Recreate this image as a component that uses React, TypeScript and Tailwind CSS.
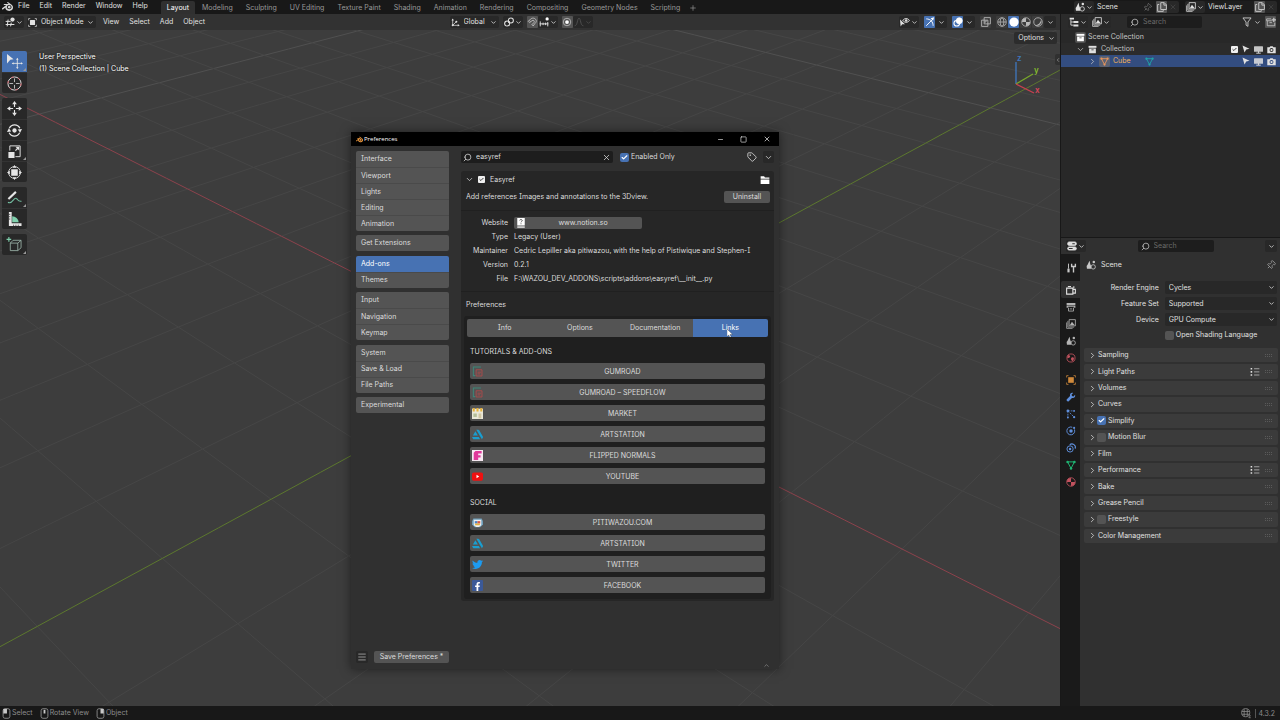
import React, { useId, useState } from 'react';
import { Check, ChevronDown, ChevronRight, Menu, Minus, Pin, Plus, Search, Square, Tag, X } from 'lucide-react';
import { FaFacebookF, FaTwitter } from 'react-icons/fa';
import { SiArtstation, SiBlender } from 'react-icons/si';
import clsx from 'clsx';

/* ---------- Icons ---------- */

type IconName =
  | 'editor3d' | 'objectMode' | 'orientation' | 'pivot' | 'magnet' | 'snapTo' | 'proportional' | 'falloff'
  | 'visibility' | 'gizmo' | 'overlay' | 'xray' | 'wire' | 'solid' | 'material' | 'rendered'
  | 'scene' | 'layers' | 'copy' | 'outliner' | 'filter' | 'newCollection' | 'collection' | 'mesh'
  | 'arrow' | 'screen' | 'camera' | 'properties' | 'tool' | 'render' | 'output' | 'world' | 'object'
  | 'wrench' | 'particles' | 'physics' | 'constraint' | 'folder' | 'help' | 'globe' | 'presets'
  | 'select' | 'cursor' | 'move' | 'rotate' | 'scale' | 'transform' | 'annotate' | 'measure' | 'addCube';

const glyphs: Record<IconName, React.ReactNode> = {
  editor3d: (
    <>
      <path d="M1 7h8M1 12h14M5 4 3.5 15M10 9l-1 6" strokeWidth="1.6" />
      <circle cx="12" cy="4" r="3.4" fill="currentColor" stroke="none" />
    </>
  ),
  objectMode: (
    <>
      <path d="M1 4V1h3M12 1h3v3M15 12v3h-3M4 15H1v-3" strokeWidth="1.2" />
      <rect x="3.5" y="3.5" width="9" height="9" rx="1" fill="currentColor" stroke="none" />
    </>
  ),
  orientation: (
    <>
      <path d="M3 2v11h11M3 13l6-6" />
      <path d="M1 4.5 3 1l2 3.5zM12 11l3.5 2-3.5 2z" fill="currentColor" stroke="none" />
      <circle cx="9.5" cy="6.5" r="1.8" fill="currentColor" stroke="none" />
      <circle cx="3" cy="13" r="1.8" fill="currentColor" stroke="none" />
    </>
  ),
  pivot: (
    <>
      <circle cx="5" cy="10.5" r="4" strokeWidth="1.7" />
      <circle cx="11" cy="5.5" r="4" strokeWidth="1.7" />
      <circle cx="8" cy="8" r="1.5" fill="currentColor" stroke="none" />
    </>
  ),
  magnet: <path d="m2 7 4-4c6-4 12 3 7 7l-3 4-2-2 3-3c2-3-1-5-3-3L4 9zM3.5 5.5l2 2M8.5 12.5l2 2" />,
  snapTo: (
    <>
      <path d="M1 11h14M2 7v8M6.5 9v4M10.5 9v4M14 8v7" strokeWidth="1.5" />
      <circle cx="13" cy="3" r="2.6" fill="#fff" stroke="none" />
    </>
  ),
  proportional: (
    <>
      <circle cx="8" cy="8" r="6" strokeWidth="1.2" />
      <circle cx="8" cy="8" r="3" fill="#fff" stroke="none" />
    </>
  ),
  falloff: <path d="M1 14c5 0 4-12 7-12s2 12 7 12" />,
  visibility: (
    <>
      <path d="M4.5 5.5C7 1.5 12.5 1.5 15 5.5c-2.5 4-8 4-10.5 0z" strokeWidth="1.6" />
      <circle cx="9.8" cy="5.5" r="2" fill="currentColor" stroke="none" />
      <path d="m0 4 1 11 2.5-3.5H8z" fill="currentColor" stroke="none" />
    </>
  ),
  gizmo: (
    <>
      <path d="M2 3c7 0 11 5 11 11M2 14 13 3" strokeWidth="1.5" />
      <path d="m9 2 5.5-1.5L13 6z" fill="currentColor" stroke="none" />
    </>
  ),
  overlay: (
    <>
      <circle cx="10" cy="6" r="4.8" fill="currentColor" />
      <circle cx="6" cy="10" r="4.5" strokeWidth="1.7" />
    </>
  ),
  xray: <path d="M5 1h10v10H5zM1 5h10v10H1zM5 8h3M8 5v3" strokeWidth="1.4" />,
  wire: (
    <>
      <circle cx="8" cy="8" r="6.8" />
      <ellipse cx="8" cy="8" rx="3" ry="6.8" />
      <path d="M1.5 8h13" />
    </>
  ),
  solid: <circle cx="8" cy="8" r="7.4" fill="currentColor" stroke="none" />,
  material: (
    <>
      <circle cx="8" cy="8" r="6.8" />
      <path d="M8 1.5V8H1.5A6.5 6.5 0 0 1 8 1.5zM8 8h6.5A6.5 6.5 0 0 1 8 14.5z" fill="currentColor" stroke="none" />
    </>
  ),
  rendered: (
    <>
      <circle cx="8" cy="8" r="6.8" />
      <path d="M13 4A7.2 7.2 0 0 1 3 13c4.5.5 9-3 10-9z" fill="currentColor" stroke="none" />
    </>
  ),
  scene: (
    <>
      <path d="M6 1c0 0 0 5 2.5 8.5L8 14H1.5L1 9.5C4 6 4 3 6 1z" fill="currentColor" stroke="none" />
      <circle cx="11.5" cy="11" r="3.5" />
      <circle cx="12.5" cy="3" r="2" fill="currentColor" stroke="none" />
    </>
  ),
  layers: (
    <>
      <path d="M5 1h10v10H5z" />
      <path d="m6 10 3.5-5.5L14 10z" fill="currentColor" stroke="none" />
      <path d="M3 3v10h10M1 5.5V15h9.5" strokeWidth="1.2" />
    </>
  ),
  copy: <path d="M6 1h5.5L15 4.5V12H6zM3.5 4H1v11h9v-2M11 1v4h4" strokeWidth="1.5" />,
  outliner: (
    <>
      <path d="M3 4v9h4M3 8h4" strokeWidth="1.4" />
      <path d="M1 1h7v3H1zM7 6.5h8v3H7zM7 12h8v3H7z" fill="currentColor" stroke="none" />
    </>
  ),
  filter: <path d="M1.5 1.5h13l-5 6.5v7l-3-2V8z" strokeWidth="1.5" />,
  newCollection: (
    <>
      <path d="M8 3H1v3h8M2 6v8h12V9M5.5 9h4" />
      <path d="M12.5 1v7M9 4.5h7" strokeWidth="2" />
    </>
  ),
  collection: (
    <>
      <path d="M1 1.5h14V5H1z" fill="currentColor" stroke="none" />
      <path fillRule="evenodd" d="M2 6h12v8.5H2zM6 8h4v1.5H6z" fill="currentColor" stroke="none" />
    </>
  ),
  mesh: (
    <>
      <path d="M2.5 3h11L8 13.5z" strokeWidth="1.6" />
      <g fill="currentColor" stroke="none">
        <circle cx="2.5" cy="3" r="2" />
        <circle cx="13.5" cy="3" r="2" />
        <circle cx="8" cy="13.5" r="2" />
      </g>
    </>
  ),
  arrow: <path d="m1 1 14 6.5-6.5 1.5L5 15z" fill="currentColor" stroke="none" />,
  screen: (
    <>
      <rect x="0" y="2" width="16" height="10" rx="1" fill="currentColor" stroke="none" fillOpacity=".85" />
      <path d="M4 14.5h8M8 11v3" strokeWidth="1.7" />
    </>
  ),
  camera: (
    <>
      <path fillRule="evenodd" d="M.5 4h4L6 2h4l1.500 2h4v10.500H.5zM8 5.500a3.500 3.500 0 1 0 0 7 3.500 3.500 0 0 0 0-7z" fill="currentColor" stroke="none" />
      <circle cx="8" cy="9" r="2" fill="currentColor" stroke="none" />
    </>
  ),
  properties: (
    <>
      <rect x="1" y="1.5" width="14" height="5.5" rx="2.5" fill="currentColor" />
      <rect x="1" y="9.5" width="14" height="5" rx="2.5" fill="currentColor" />
      <path d="M8.5 3.5h4V5h-4zM3 11.3h6v1.5H3z" fill="#303030" stroke="none" />
    </>
  ),
  tool: (
    <>
      <path d="M4 1v8" strokeWidth="1.5" />
      <path d="M4 9v6" strokeWidth="3.5" />
      <path d="M9 1v4.500h6V1M12 5.500V15" strokeWidth="2.2" />
    </>
  ),
  render: (
    <>
      <path d="M1 5h10v9.500H1z" strokeWidth="1.8" />
      <path d="M3 2.500h5M11 7h4v6h-4M12.500 2v3" strokeWidth="1.7" />
    </>
  ),
  output: (
    <>
      <path d="M1 1.500h14V5H1zM1 6h14v3h-2V7.500H3V9H1z" fill="currentColor" stroke="none" />
      <path d="M4 9v5.500h8V9M6 11h4" />
    </>
  ),
  world: (
    <>
      <circle cx="8" cy="8" r="6.5" />
      <path d="M4 3c4 1 3 4 0 5-2 1-3-3 0-5zM9 7c4-1 5 2 2 6-3-1-4-4-2-6zM10 2l3 2" fill="currentColor" stroke="none" />
    </>
  ),
  object: (
    <>
      <path d="M1 4V1h3M12 1h3v3M15 12v3h-3M4 15H1v-3" strokeWidth="1.2" />
      <path d="M3.5 3.5h9v9h-9z" fill="currentColor" stroke="none" />
    </>
  ),
  wrench: <path d="M14.5 4.5 12 7 9.5 6.5 9 4l2.5-2.5C8 .5 5.5 3 6.5 6.5L1 12c-.5 2 1 3.5 3 3l5.5-5.5C13 10.5 15.5 8 14.5 4.5z" fill="currentColor" stroke="none" />,
  particles: (
    <>
      <path d="M3 3v11M3 3l10 10M3 3h10" strokeDasharray="3 1.5" />
      <g fill="currentColor" stroke="none">
        <circle cx="3" cy="3" r="2.2" />
        <circle cx="13" cy="3" r="1.5" />
        <circle cx="3" cy="13.5" r="1.5" />
        <circle cx="13" cy="13" r="1.8" />
      </g>
    </>
  ),
  physics: (
    <>
      <path d="M13.5 5.5A6.3 6.3 0 1 1 10 2" strokeWidth="1.5" />
      <circle cx="8" cy="8" r="2.8" fill="currentColor" stroke="none" />
      <circle cx="13" cy="3" r="1.7" fill="currentColor" stroke="none" />
    </>
  ),
  constraint: (
    <>
      <circle cx="6.5" cy="9.5" r="5" strokeWidth="1.5" />
      <circle cx="6.5" cy="9.5" r="2" fill="currentColor" stroke="none" />
      <path d="M6 3c4-4 11 1 8.5 6" strokeWidth="1.8" />
    </>
  ),
  folder: <path d="M1 2h5.500L8 4h7v2H1zM1 7h14v7.500H1z" fill="currentColor" stroke="none" />,
  help: (
    <>
      <path d="M2 0h12v12H2z" fill="currentColor" stroke="none" />
      <path d="M2 14.5h12" strokeWidth="2" />
      <path d="M6 4c0-2.5 4.500-2 4 .5-.3 1.200-2 1-2 2.500M8 8.500V10" stroke="#444" strokeWidth="1.3" />
    </>
  ),
  globe: (
    <>
      <circle cx="7.5" cy="7.5" r="6.5" />
      <path d="M1.5 5.500h12M1.500 10h12M5 2v11M10 2v11" />
      <path d="M12.5 11.500c2-1 3 .5 1.500 2l-1.500 2h3" />
    </>
  ),
  presets: (
    <>
      <path d="M6.5 2.800H15M6.500 7.800H15M6.500 12.800H15" strokeWidth="1" />
      <path d="M1 1.500h2.500V4H1zM1 6.500h2.500V9H1zM1 11.500h2.500V14H1z" fill="currentColor" stroke="none" />
    </>
  ),
  select: (
    <>
      <path d="m0 0 7 5.5-3.5.5L0 10z" fill="currentColor" stroke="none" />
      <path d="M11 5v10M6 10h10" strokeWidth=".9" />
      <path d="m11 4 1.300 2H9.700zM11 16l1.300-2H9.700zM5 10l2-1.300v2.600zM17 10l-2-1.300v2.600z" fill="currentColor" stroke="none" />
    </>
  ),
  cursor: (
    <>
      <circle cx="8" cy="8" r="7" strokeWidth="1" />
      <circle cx="8" cy="8" r="7" strokeWidth="1" stroke="#cf4b55" strokeDasharray="2.5 4.83" />
      <path d="M8 2.500v4M8 9.500v4M2.500 8h4M9.500 8h4" strokeWidth=".8" />
    </>
  ),
  move: (
    <>
      <path d="m8 0 2.500 3.500h-5zM8 16l2.500-3.500h-5zM0 8l3.500-2.500v5zM16 8l-3.500-2.500v5z" fill="currentColor" stroke="none" />
      <path d="M8 3v3.500M8 9.500V13M3 8h3.500M9.500 8H13" strokeWidth="1.2" />
    </>
  ),
  rotate: (
    <>
      <path d="M2.5 5.5a6.2 6.2 0 0 1 11.2 0M13.5 10.5a6.2 6.2 0 0 1-11.2 0" />
      <circle cx="8" cy="8" r="2.3" fill="currentColor" stroke="none" />
      <path d="M16 6.5 11.5 7l2.5 3.5zM0 9.5 4.5 9 2 5.5z" fill="currentColor" stroke="none" />
    </>
  ),
  scale: (
    <>
      <path d="M3 7V2h11v11.500H9" strokeWidth="1" />
      <path d="M1.5 8.500H8V15H1.500zM13 3v4L9 3z" fill="currentColor" stroke="none" />
      <path d="m9 7 3-3" />
    </>
  ),
  transform: (
    <>
      <circle cx="8" cy="8" r="6.3" strokeWidth=".9" />
      <path d="M4.500 4.500h7v7h-7z" fill="currentColor" stroke="none" />
      <path d="m8 0 2 3H6zM8 16l2-3H6zM0 8l3-2v4zM16 8l-3-2v4z" fill="currentColor" stroke="none" />
    </>
  ),
  annotate: (
    <>
      <path d="m1.5 9.5 8-7.5" strokeWidth="2.2" />
      <path d="M1 13c5 3 6-6 9-4 2 1 1 3.5 5.500 3" stroke="#74bfa2" strokeWidth="1.1" />
    </>
  ),
  measure: (
    <>
      <path d="M5.500 11V4.500A7 7 0 0 1 12.500 11z" fill="#7fd0ad" stroke="none" />
      <path d="M2 0h3v12h10.500v3H2z" fill="currentColor" stroke="none" />
      <path d="M2 2.500h1.500M2 5h1.500M2 7.500h1.500M7 15v-1.500M9.500 15v-1.500M12 15v-1.500" stroke="#282828" strokeWidth=".7" />
    </>
  ),
  addCube: (
    <>
      <path d="M3.500 6.500h8v8h-8zM3.500 6.500l3-3H15v8l-3.500 3M11.500 6.500l3.500-3" stroke="#a9c4b8" strokeWidth=".8" />
      <path d="M2 0v5M-.5 2.500h5" stroke="#7fd0ad" strokeWidth="1.2" />
    </>
  ),
};

function Icon({ name, className = 'size-[10px]' }: { name: IconName; className?: string }) {
  return (
    <svg
      viewBox="0 0 16 16"
      fill="none"
      stroke="currentColor"
      strokeWidth="1.3"
      aria-hidden="true"
      className={clsx('shrink-0 overflow-visible', className)}
    >
      {glyphs[name]}
    </svg>
  );
}

/* ---------- Small controls ---------- */

function Caret({ className = 'text-[#c8c8c8]' }: { className?: string }) {
  return <ChevronDown className={clsx('size-[7px] shrink-0', className)} strokeWidth={3} />;
}

function CaretButton({ label }: { label: string }) {
  return (
    <button type="button" aria-label={label} className="flex h-[12px] w-[12px] items-center justify-center rounded-[2px] bg-[#282828]">
      <Caret />
    </button>
  );
}

function CheckBox({ label, checked = false, hideLabel = false, plain = false }: {
  label: string; checked?: boolean; hideLabel?: boolean; plain?: boolean;
}) {
  const id = useId();
  const [on, setOn] = useState(checked);
  return (
    <span className="flex items-center gap-[2px]">
      <span className={clsx('relative shrink-0', plain ? 'size-[7px]' : 'size-[9px]')}>
        <input
          id={id}
          type="checkbox"
          checked={on}
          onChange={(e) => setOn(e.target.checked)}
          aria-label={hideLabel ? label : undefined}
          className={clsx(
            'peer block size-full appearance-none bg-[#545454]',
            plain ? 'rounded-[1px] checked:bg-[#f0f0f0]' : 'rounded-[2px] checked:bg-[#4772b3]',
          )}
        />
        <Check
          strokeWidth={4}
          className={clsx('pointer-events-none absolute inset-0 hidden size-full p-px peer-checked:block', plain ? 'text-[#181818]' : 'text-white')}
        />
      </span>
      {!hideLabel && <label htmlFor={id}>{label}</label>}
    </span>
  );
}

function Dropdown({ label, value, icon, className }: { label: string; value: string; icon?: IconName; className?: string }) {
  return (
    <span className={clsx('relative flex items-center rounded-[2px] bg-[#282828] text-[#e0e0e0]', className)}>
      {icon && <Icon name={icon} className="ml-[1px] size-[9px]" />}
      <select aria-label={label} className="h-full w-full appearance-none bg-transparent pr-[12px] pl-[4px] outline-none">
        <option>{value}</option>
      </select>
      <Caret className="pointer-events-none absolute right-[2px] text-[#c8c8c8]" />
    </span>
  );
}

function IconMenu({ icon, label, className, dim = false }: { icon: IconName; label: string; className?: string; dim?: boolean }) {
  return (
    <button
      type="button"
      aria-label={label}
      className={clsx('flex h-[12px] items-center gap-px rounded-[2px] bg-[#282828] px-px', dim ? 'text-[#555]' : 'text-[#e0e0e0]', className)}
    >
      <Icon name={icon} />
      <Caret className={dim ? 'text-[#4a4a4a]' : 'text-[#c8c8c8]'} />
    </button>
  );
}

function IconToggle({ icon, label, state = 'off' }: { icon: IconName; label: string; state?: 'off' | 'lit' | 'on' }) {
  return (
    <button
      type="button"
      aria-label={label}
      className={clsx(
        'flex h-[12px] w-[11px] items-center justify-center rounded-[1px]',
        state === 'on' && 'bg-[#4772b3] text-white',
        state === 'lit' && 'bg-[#545454] text-[#c8c8c8]',
        state === 'off' && 'bg-[#3c3c3c] text-[#b8b8b8]',
      )}
    >
      <Icon name={icon} />
    </button>
  );
}

function SearchBox({ label, className }: { label: string; className?: string }) {
  return (
    <span className={clsx('flex h-[12px] items-center gap-[4px] rounded-[2px] bg-[#1d1d1d] px-[3px]', className)}>
      <Search className="size-[9px] shrink-0 -scale-x-100 text-[#c8c8c8]" />
      <input type="search" aria-label={label} placeholder="Search" className="w-full min-w-0 bg-transparent outline-none placeholder:text-[#6a6a6a]" />
    </span>
  );
}

/* ---------- Top bar ---------- */

const menus = ['File', 'Edit', 'Render', 'Window', 'Help'];
const workspaces = [
  'Layout', 'Modeling', 'Sculpting', 'UV Editing', 'Texture Paint', 'Shading',
  'Animation', 'Rendering', 'Compositing', 'Geometry Nodes', 'Scripting',
];

function DataBlock({ icon, name, pinned, className }: { icon: IconName; name: string; pinned?: boolean; className?: string }) {
  return (
    <div className={clsx('flex h-[12px] items-center rounded-[2px] bg-[#1d1d1d]', className)}>
      <IconMenu icon={icon} label={`Browse ${name}`} />
      <input aria-label={`${name} name`} defaultValue={name} className="min-w-0 flex-1 bg-transparent pl-[3px] text-[#e0e0e0] outline-none" />
      {pinned && <Pin className="mr-[4px] size-[9px] rotate-45 text-[#777]" />}
      <IconToggle icon="copy" label={`Copy ${name}`} state="lit" />
      <button type="button" aria-label={`Remove ${name}`} className="flex h-full w-[12px] items-center justify-center rounded-r-[2px] bg-[#282828] text-[#4a4a4a]">
        <X className="size-[8px]" />
      </button>
    </div>
  );
}

function TopBar() {
  return (
    <header className="flex h-[14px] shrink-0 items-center bg-[#181818] pr-[3px] pl-[2px]">
      <SiBlender className="mr-[5px] size-[11px] -translate-y-px text-[#d8d8d8]" />
      <nav aria-label="Main menu" className="flex -translate-y-px gap-[10px] text-[#e0e0e0]">
        {menus.map((m) => (
          <button key={m} type="button">{m}</button>
        ))}
      </nav>
      <nav aria-label="Workspaces" className="ml-[13px] flex h-full items-end gap-px text-[#989898]">
        {workspaces.map((w) => (
          <button
            key={w}
            type="button"
            className={clsx('h-[13px] rounded-t-[2px] px-[6px]', w === 'Layout' && 'bg-[#303030] text-white')}
          >
            {w}
          </button>
        ))}
        <button type="button" aria-label="Add workspace" className="flex h-[13px] items-center px-[2px]">
          <Plus className="size-[8px]" />
        </button>
      </nav>
      <div className="ml-auto flex gap-[6px]">
        <DataBlock icon="scene" name="Scene" pinned className="w-[105px]" />
        <DataBlock icon="layers" name="ViewLayer" className="w-[92px]" />
      </div>
    </header>
  );
}

/* ---------- 3D viewport ---------- */

// Perspective projection of the ground plane around the world origin.
const ORIGIN = { x: 527, y: 360 };
const FOCAL = 1168;
const CELL = 103;
const SIN_TILT = 0.5236;
const COS_TILT = 0.852;

function project(gx: number, gy: number) {
  const right = CELL * (gx * 0.7205 + gy * 0.6935);
  const away = CELL * (gy * 0.7205 - gx * 0.6935);
  const depth = 1 + (away * COS_TILT) / FOCAL;
  return { depth, x: ORIGIN.x + right / depth, y: ORIGIN.y - (away * SIN_TILT) / depth };
}

function groundLine(alongX: boolean, offset: number) {
  const points: string[] = [];
  for (let t = -40; t <= 40; t += 0.5) {
    const p = alongX ? project(t, offset) : project(offset, t);
    if (p.depth > 0.2) points.push(`${p.x.toFixed(1)},${p.y.toFixed(1)}`);
  }
  return points.join(' ');
}

const gridSteps = Array.from({ length: 61 }, (_, i) => i - 30).filter((i) => i !== 0);

function Scene3D() {
  return (
    <svg viewBox="0 30 1060 676" preserveAspectRatio="xMidYMid slice" aria-hidden="true" className="absolute inset-0 size-full">
      <g fill="none" strokeWidth="1">
        {gridSteps.map((i) => (
          <g key={i} stroke={i % 10 === 0 ? '#505050' : '#464646'}>
            <polyline points={groundLine(true, i)} />
            <polyline points={groundLine(false, i)} />
          </g>
        ))}
        <polyline points={groundLine(true, 0)} stroke="#8c424c" />
        <polyline points={groundLine(false, 0)} stroke="#5c782e" />
      </g>
    </svg>
  );
}

function AxisGizmo() {
  return (
    <svg viewBox="0 0 32 42" aria-label="View axes" className="absolute top-[24px] right-[18px] h-[42px] w-[32px]" fontSize="8" fontWeight="600">
      <g fill="none" strokeWidth="1.3">
        <path d="M6 30V8" stroke="#3f78c0" />
        <path d="m6 30 17-10" stroke="#78a82a" />
        <path d="m6 30 18 9" stroke="#c9404f" />
      </g>
      <text x="7" y="7" fill="#3f78c0">z</text>
      <text x="24" y="19" fill="#86bc2f">y</text>
      <text x="25" y="39" fill="#d9455a">x</text>
    </svg>
  );
}

const toolGroups: { icon: IconName; label: string; more?: boolean }[][] = [
  [{ icon: 'select', label: 'Tweak', more: true }, { icon: 'cursor', label: 'Cursor' }],
  [
    { icon: 'move', label: 'Move' }, { icon: 'rotate', label: 'Rotate' },
    { icon: 'scale', label: 'Scale', more: true }, { icon: 'transform', label: 'Transform' },
  ],
  [{ icon: 'annotate', label: 'Annotate', more: true }, { icon: 'measure', label: 'Measure' }],
  [{ icon: 'addCube', label: 'Add Cube', more: true }],
];

function Toolbar() {
  return (
    <div role="toolbar" aria-label="Tools" className="flex w-[25px] flex-col gap-[5px]">
      {toolGroups.map((group) => (
        <div key={group[0].label} className="flex flex-col overflow-hidden rounded-[2px]">
          {group.map((tool, i) => (
            <button
              key={tool.label}
              type="button"
              aria-label={tool.label}
              className={clsx(
                'relative flex h-[21px] items-center justify-center text-[#e6e6e6]',
                tool.label === 'Tweak' ? 'bg-[#4772b3]' : 'bg-[#282828]',
                i > 0 && 'border-t border-[#333]',
              )}
            >
              <Icon name={tool.icon} className="size-[15px]" />
              {tool.more && (
                <svg viewBox="0 0 3 3" className="absolute right-[1px] bottom-[1px] size-[3px]" aria-hidden="true">
                  <path d="M3 0v3H0z" fill="#999" />
                </svg>
              )}
            </button>
          ))}
        </div>
      ))}
    </div>
  );
}

function ViewportHeader() {
  return (
    <div className="grid h-[16px] shrink-0 grid-cols-[1fr_auto_1fr] items-center bg-[#323232] px-[4px] text-[#e0e0e0]">
      <div className="flex items-center">
        <IconMenu icon="editor3d" label="Editor type" />
        <Dropdown label="Mode" value="Object Mode" icon="objectMode" className="ml-[3px] h-[12px]" />
        <nav aria-label="Viewport menu" className="ml-[7px] flex gap-[10px]">
          {['View', 'Select', 'Add', 'Object'].map((m) => (
            <button key={m} type="button">{m}</button>
          ))}
        </nav>
      </div>
      <div className="mr-[18px] flex items-center gap-[4px]">
        <Dropdown label="Orientation" value="Global" icon="orientation" className="h-[12px] w-[49px]" />
        <IconMenu icon="pivot" label="Pivot point" />
        <div className="flex">
          <IconToggle icon="magnet" label="Snap" state="lit" />
          <IconMenu icon="snapTo" label="Snap to" />
        </div>
        <div className="flex">
          <IconToggle icon="proportional" label="Proportional editing" state="lit" />
          <IconMenu icon="falloff" label="Falloff" dim />
        </div>
      </div>
      <div className="flex items-center justify-end gap-[5px]">
        <IconMenu icon="visibility" label="Object types" />
        <div className="flex">
          <IconToggle icon="gizmo" label="Gizmos" state="on" />
          <CaretButton label="Gizmo options" />
        </div>
        <div className="flex">
          <IconToggle icon="overlay" label="Overlays" state="on" />
          <CaretButton label="Overlay options" />
        </div>
        <IconToggle icon="xray" label="X-ray" />
        <div className="flex gap-px">
          <IconToggle icon="wire" label="Wireframe" />
          <IconToggle icon="solid" label="Solid" state="on" />
          <IconToggle icon="material" label="Material preview" />
          <IconToggle icon="rendered" label="Rendered" />
          <CaretButton label="Shading options" />
        </div>
      </div>
    </div>
  );
}

function Viewport() {
  return (
    <section aria-label="3D viewport" className="flex min-w-0 flex-1 flex-col">
      <ViewportHeader />
      <div className="relative flex-1 overflow-hidden bg-[#3d3d3d]">
        <Scene3D />
        <div className="relative flex items-start pt-[21px] pl-[2px]">
          <Toolbar />
          <div className="ml-[12px] leading-[12px] text-white [text-shadow:0_0_2px_#000]">
            <p>User Perspective</p>
            <p>(1) Scene Collection | Cube</p>
          </div>
        </div>
        <button type="button" className="absolute top-[2px] right-[3px] flex h-[12px] items-center gap-[4px] rounded-[2px] bg-[#2c2c2c] pr-[2px] pl-[4px] text-[#e0e0e0]">
          Options <Caret />
        </button>
        <AxisGizmo />
        <button type="button" aria-label="Show sidebar" className="absolute top-[24px] right-0 flex h-[11px] w-[5px] items-center rounded-l-[2px] bg-[#303030]">
          <ChevronDown className="size-[6px] shrink-0 rotate-90 text-[#c8c8c8]" />
        </button>
      </div>
    </section>
  );
}

/* ---------- Outliner ---------- */

function Outliner() {
  return (
    <section aria-label="Outliner" className="flex h-[223px] shrink-0 flex-col bg-[#282828]">
      <div className="flex h-[16px] items-center bg-[#2b2b2b] pr-[4px] pl-[7px]">
        <IconMenu icon="outliner" label="Editor type" />
        <IconMenu icon="layers" label="Display mode" className="ml-[3px]" />
        <SearchBox label="Search outliner" className="mr-auto ml-[16px] w-[75px]" />
        <button type="button" aria-label="Filter" className="flex items-center gap-[2px] text-[#c8c8c8]">
          <Icon name="filter" /> <Caret />
        </button>
        <span className="ml-[4px]"><IconToggle icon="newCollection" label="New collection" state="lit" /></span>
      </div>
      <ul className="pt-px text-[#c4c4c4]">
        <li className="flex h-[12px] items-center gap-[2px] pl-[14px]">
          <span className="rounded-[2px] bg-[#505050] p-px"><Icon name="collection" className="size-[9px] text-white" /></span>
          Scene Collection
        </li>
        <li className="flex h-[12px] items-center bg-[#2b2b2b] pr-[4px] pl-[15px]">
          <ChevronDown className="size-[9px]" />
          <Icon name="collection" className="ml-[3px] size-[9px] text-[#e0e0e0]" />
          <span className="ml-[4px]">Collection</span>
          <span className="ml-auto flex items-center gap-[4px] text-[#e0e0e0]">
            <CheckBox label="Exclude from view layer" checked hideLabel plain />
            <Icon name="arrow" className="size-[8px]" />
            <Icon name="screen" className="size-[9px]" />
            <Icon name="camera" className="size-[9px]" />
          </span>
        </li>
        <li className="flex h-[12px] items-center bg-[#334d80] pr-[4px] pl-[27px]">
          <ChevronRight className="size-[9px]" />
          <span className="ml-[2px] rounded-[2px] bg-[#5b6274] p-px"><Icon name="mesh" className="size-[9px] text-[#e8955c]" /></span>
          <span className="ml-[3px] text-[#f0b25a]">Cube</span>
          <Icon name="mesh" className="ml-[14px] size-[9px] text-[#1fa3a8]" />
          <span className="ml-auto flex items-center gap-[4px] text-[#e0e0e0]">
            <Icon name="arrow" className="size-[8px]" />
            <Icon name="screen" className="size-[9px]" />
            <Icon name="camera" className="size-[9px]" />
          </span>
        </li>
      </ul>
    </section>
  );
}

/* ---------- Properties editor ---------- */

const propertyTabs: { icon: IconName; label: string; tint: string }[][] = [
  [{ icon: 'tool', label: 'Tool', tint: 'text-[#c8c8c8]' }],
  [
    { icon: 'render', label: 'Render', tint: 'text-[#e0e0e0]' },
    { icon: 'output', label: 'Output', tint: 'text-[#b4b4b4]' },
    { icon: 'layers', label: 'View Layer', tint: 'text-[#b4b4b4]' },
    { icon: 'scene', label: 'Scene', tint: 'text-[#b4b4b4]' },
    { icon: 'world', label: 'World', tint: 'text-[#c2525e]' },
  ],
  [
    { icon: 'object', label: 'Object', tint: 'text-[#d08a3c]' },
    { icon: 'wrench', label: 'Modifiers', tint: 'text-[#5f8fdc]' },
    { icon: 'particles', label: 'Particles', tint: 'text-[#5f8fdc]' },
    { icon: 'physics', label: 'Physics', tint: 'text-[#5f8fdc]' },
    { icon: 'constraint', label: 'Constraints', tint: 'text-[#5f8fdc]' },
    { icon: 'mesh', label: 'Data', tint: 'text-[#1fb573]' },
    { icon: 'material', label: 'Material', tint: 'text-[#c2525e]' },
  ],
];

const renderPanels: { title: string; presets?: boolean; toggle?: 'on' | 'off' }[] = [
  { title: 'Sampling' },
  { title: 'Light Paths', presets: true },
  { title: 'Volumes' },
  { title: 'Curves' },
  { title: 'Simplify', toggle: 'on' },
  { title: 'Motion Blur', toggle: 'off' },
  { title: 'Film' },
  { title: 'Performance', presets: true },
  { title: 'Bake' },
  { title: 'Grease Pencil' },
  { title: 'Freestyle', toggle: 'off' },
  { title: 'Color Management' },
];

function GripDots() {
  return (
    <svg viewBox="0 0 7 3" className="h-[3px] w-[7px] text-[#5a5a5a]" aria-hidden="true">
      <path d="M0 .5h7M0 2.500h7" stroke="currentColor" strokeDasharray="1 1" />
    </svg>
  );
}

function Properties() {
  return (
    <section aria-label="Properties" className="mt-px flex min-h-0 flex-1 flex-col bg-[#303030] text-[#e0e0e0]">
      <div className="flex h-[16px] shrink-0 items-center pr-[3px] pl-[5px]">
        <IconMenu icon="properties" label="Editor type" />
        <SearchBox label="Search properties" className="mx-auto w-[76px]" />
        <CaretButton label="Options" />
      </div>
      <div className="flex min-h-0 flex-1">
        <div role="tablist" aria-label="Property tabs" className="flex w-[19px] flex-col gap-[5px] bg-[#1a1a1a] pt-[5px]">
          {propertyTabs.map((group) => (
            <div key={group[0].label}>
              {group.map((tab) => (
                <button
                  key={tab.label}
                  type="button"
                  role="tab"
                  aria-label={tab.label}
                  aria-selected={tab.label === 'Render'}
                  className={clsx('flex h-[17px] w-full items-center justify-center', tab.tint, tab.label === 'Render' && 'rounded-l-[2px] bg-[#303030]')}
                >
                  <Icon name={tab.icon} />
                </button>
              ))}
            </div>
          ))}
        </div>
        <div className="min-w-0 flex-1 pr-[2px] pl-[4px]">
          <div className="flex h-[22px] items-center pr-[2px] pl-[2px]">
            <Icon name="scene" className="size-[10px] text-[#c8c8c8]" />
            <span className="ml-[5px]">Scene</span>
            <Pin className="ml-auto size-[10px] rotate-45 text-[#9a9a9a]" />
          </div>
          <div className="mt-[5px] flex flex-col gap-[3px] pr-px">
            {[['Render Engine', 'Cycles'], ['Feature Set', 'Supported'], ['Device', 'GPU Compute']].map(([label, value]) => (
              <div key={label} className="grid grid-cols-[2fr_3fr] items-center gap-[6px]">
                <span className="text-right">{label}</span>
                <Dropdown label={label} value={value} className="h-[13px]" />
              </div>
            ))}
            <div className="grid h-[12px] grid-cols-[2fr_3fr] items-center gap-[6px]">
              <span />
              <CheckBox label="Open Shading Language" />
            </div>
          </div>
          <div className="mt-[7px] flex h-[195px] flex-col gap-[2px]">
            {renderPanels.map((panel) => (
              <div key={panel.title} className="flex flex-1 items-center rounded-[2px] bg-[#3b3b3b] pr-[6px] pl-[4px]">
                <button type="button" aria-label={`Expand ${panel.title}`}><ChevronRight className="size-[9px]" /></button>
                <span className={panel.toggle ? 'ml-0' : 'ml-px'}>
                  {panel.toggle ? <CheckBox label={panel.title} checked={panel.toggle === 'on'} /> : panel.title}
                </span>
                <span className="ml-auto flex items-center gap-[5px]">
                  {panel.presets && <Icon name="presets" />}
                  <GripDots />
                </span>
              </div>
            ))}
          </div>
        </div>
      </div>
    </section>
  );
}

/* ---------- Preferences window ---------- */

const navGroups = [
  ['Interface', 'Viewport', 'Lights', 'Editing', 'Animation'],
  ['Get Extensions'],
  ['Add-ons', 'Themes'],
  ['Input', 'Navigation', 'Keymap'],
  ['System', 'Save & Load', 'File Paths'],
  ['Experimental'],
];

function GumroadLogo() {
  return (
    <svg viewBox="0 0 16 16" fill="none" className="size-[11px]" aria-hidden="true">
      <path d="M13 1.500H2V14h3" stroke="#3d8577" strokeWidth="1.5" />
      <path d="M6 5.500h8.500v9H6zM8 9h5M8 11.500h4" stroke="#b04a4a" strokeWidth="1.3" />
    </svg>
  );
}

function MarketLogo() {
  return (
    <svg viewBox="0 0 16 16" className="size-[11px]" aria-hidden="true">
      <path d="M0 1h16v15H0z" fill="#e9e7d8" />
      <path d="M1 0h3v5H1zM6.500 0h3v5h-3zM12 0h3v5h-3z" fill="#e5b13c" />
      <path d="M2 8h5v5H2z" fill="#b3bd98" />
      <path d="M9.500 8h4v7h-4z" fill="#cfc5a2" />
    </svg>
  );
}

function FlippedNormalsLogo() {
  return (
    <svg viewBox="0 0 16 16" className="size-[11px]" aria-hidden="true">
      <path d="M0 0h16v16H0z" fill="#f6e8f1" />
      <path d="M5 1.500h9V5H9v2.500h3.500V11H9v3.500H2.500V4z" fill="#e0389a" />
    </svg>
  );
}

function YoutubeLogo() {
  return (
    <svg viewBox="0 0 16 16" className="size-[11px]" aria-hidden="true">
      <rect x="0" y="2" width="16" height="12" rx="2.5" fill="#ee1111" />
      <path d="M6.500 5.500v5l4-2.500z" fill="#fff" />
    </svg>
  );
}

function PitiwazouLogo() {
  return (
    <svg viewBox="0 0 16 16" className="size-[11px]" aria-hidden="true">
      <path d="M2 2h12l2 4v5l-4 4H4l-4-4V6z" fill="#6fa0bd" />
      <path d="M2.500 4h11v8L10 14.500H6L2.500 12z" fill="#efefef" />
      <path d="M4 6h4v3.500H4z" fill="#4a84c8" />
      <path d="M8 6h4v3.500H8z" fill="#d6584a" />
      <path d="M4.500 9.500h7V12h-7z" fill="#e3b341" />
    </svg>
  );
}

function FacebookLogo() {
  return (
    <span className="flex size-[11px] items-end justify-center rounded-[1px] bg-[#3b5998]">
      <FaFacebookF className="size-[9px] text-white" />
    </span>
  );
}

const artstation = <SiArtstation className="size-[11px] text-[#1a9ed0]" />;

const linkSections: { title: string; links: { label: string; logo: React.ReactNode }[] }[] = [
  {
    title: 'TUTORIALS & ADD-ONS',
    links: [
      { label: 'GUMROAD', logo: <GumroadLogo /> },
      { label: 'GUMROAD – SPEEDFLOW', logo: <GumroadLogo /> },
      { label: 'MARKET', logo: <MarketLogo /> },
      { label: 'ARTSTATION', logo: artstation },
      { label: 'FLIPPED NORMALS', logo: <FlippedNormalsLogo /> },
      { label: 'YOUTUBE', logo: <YoutubeLogo /> },
    ],
  },
  {
    title: 'SOCIAL',
    links: [
      { label: 'PITIWAZOU.COM', logo: <PitiwazouLogo /> },
      { label: 'ARTSTATION', logo: artstation },
      { label: 'TWITTER', logo: <FaTwitter className="size-[11px] text-[#1d9bf0]" /> },
      { label: 'FACEBOOK', logo: <FacebookLogo /> },
    ],
  },
];

function TitleBar() {
  return (
    <div className="flex h-[14px] shrink-0 items-center bg-black pl-[5px] font-['Open_Sans',sans-serif] text-[6px] text-white">
      <SiBlender className="mr-[1px] size-[7px] text-[#e8953c]" />
      Preferences
      <div className="ml-auto flex items-center">
        <button type="button" aria-label="Minimize" className="flex w-[24px] justify-center"><Minus className="size-[7px]" /></button>
        <button type="button" aria-label="Maximize" className="flex w-[23px] justify-center"><Square className="size-[7px]" /></button>
        <button type="button" aria-label="Close" className="flex w-[24px] justify-center"><X className="size-[8px]" /></button>
      </div>
    </div>
  );
}

function AddonPanel() {
  const [tab, setTab] = useState('Links');
  return (
    <div className="mt-[8px] rounded-[3px] bg-[#262626]">
      <div className="flex h-[17px] items-center pr-[4px] pl-[4px]">
        <button type="button" aria-label="Collapse Easyref"><ChevronDown className="size-[9px]" /></button>
        <span className="ml-[4px] flex items-center gap-[5px]">
          <CheckBox label="Enable Easyref" checked hideLabel plain />
          Easyref
        </span>
        <button type="button" aria-label="Open folder" className="ml-auto text-white"><Icon name="folder" /></button>
      </div>
      <div className="flex h-[18px] items-center justify-between pr-[4px] pl-[5px]">
        <p>Add references Images and annotations to the 3Dview.</p>
        <button type="button" className="h-[12px] w-[46px] rounded-[2px] bg-[#545454]">Uninstall</button>
      </div>
      <dl className="mt-[4px] grid auto-rows-[14px] grid-cols-[47px_1fr] items-center gap-x-[6px] border-y border-[#202020] py-[5px]">
        <dt className="text-right">Website</dt>
        <dd>
          <a href="#website" className="flex h-[12px] w-[128px] items-center rounded-[2px] bg-[#545454] px-[2px]">
            <Icon name="help" className="size-[10px] text-white" />
            <span className="flex-1 text-center">www.notion.so</span>
          </a>
        </dd>
        <dt className="text-right">Type</dt>
        <dd>Legacy (User)</dd>
        <dt className="text-right">Maintainer</dt>
        <dd className="overflow-hidden whitespace-nowrap">Cedric Lepiller aka pitiwazou, with the help of Pistiwique and Stephen-I</dd>
        <dt className="text-right">Version</dt>
        <dd>0.2.1</dd>
        <dt className="text-right">File</dt>
        <dd>F:\WAZOU_DEV_ADDONS\scripts\addons\easyref\__init__.py</dd>
      </dl>
      <h2 className="mt-[6px] h-[14px] pl-[5px] leading-[14px]">Preferences</h2>
      <div className="mx-[3px] mt-[4px] rounded-[3px] bg-[#1f1f1f] px-[3px] pt-[3px] pb-[6px]">
        <div role="tablist" aria-label="Addon preferences" className="flex overflow-hidden rounded-[2px]">
          {['Info', 'Options', 'Documentation', 'Links'].map((name) => (
            <button
              key={name}
              type="button"
              role="tab"
              aria-selected={tab === name}
              onClick={() => setTab(name)}
              className={clsx('relative h-[18px] flex-1', tab === name ? 'bg-[#4772b3] text-white' : 'bg-[#545454]')}
            >
              {name}
              {name === 'Links' && (
                <svg viewBox="0 0 6 9" className="absolute top-[10px] left-[34px] h-[9px] w-[6px]" aria-hidden="true">
                  <path d="M0 0v7.500L1.800 6l1.200 3 1.300-.6L3 5.500h2.600z" fill="#fff" stroke="#222" strokeWidth=".3" />
                </svg>
              )}
            </button>
          ))}
        </div>
        {linkSections.map((section, i) => (
          <div key={section.title} className={clsx('px-[3px]', i === 0 ? 'mt-[8px]' : 'mt-[12px]')}>
            <h3 className="h-[14px] leading-[14px]">{section.title}</h3>
            <ul className="mt-[4px] flex flex-col gap-[5px]">
              {section.links.map((link) => (
                <li key={link.label}>
                  <a href="#link" className="flex h-[16px] items-center rounded-[2px] bg-[#545454] pr-[3px] pl-[2px]">
                    {link.logo}
                    <span className="flex-1 pt-px text-center">{link.label}</span>
                  </a>
                </li>
              ))}
            </ul>
          </div>
        ))}
      </div>
      <div className="h-[2px]" />
    </div>
  );
}

function PreferencesWindow() {
  return (
    <div role="dialog" aria-label="Preferences" className="absolute top-[132px] left-[351px] flex h-[537px] w-[428px] flex-col bg-[#303030] text-[#dcdcdc] shadow-[0_0_10px_rgba(0,0,0,0.5)]">
      <TitleBar />
      <div className="flex min-h-0 flex-1 gap-[12px] px-[5px] pt-[5px]">
        <nav aria-label="Preference sections" className="flex h-[262px] w-[93px] flex-col justify-between">
          {navGroups.map((group) => (
            <div key={group[0]} className="flex flex-col overflow-hidden rounded-[2px]">
              {group.map((item, i) => (
                <button
                  key={item}
                  type="button"
                  className={clsx(
                    'h-[16px] pl-[5px] text-left',
                    item === 'Add-ons' ? 'bg-[#4772b3] text-white' : 'bg-[#545454]',
                    i > 0 && 'border-t border-[#4a4a4a]',
                  )}
                >
                  {item}
                </button>
              ))}
            </div>
          ))}
        </nav>
        <div className="min-w-0 flex-1">
          <div className="flex h-[12px] items-center">
            <div className="flex h-[12px] w-[152px] items-center gap-[4px] rounded-[2px] bg-[#1d1d1d] px-[2px]">
              <Search className="size-[9px] shrink-0 -scale-x-100" />
              <input aria-label="Search add-ons" defaultValue="easyref" className="min-w-0 flex-1 bg-transparent outline-none" />
              <button type="button" aria-label="Clear search"><X className="size-[9px]" /></button>
            </div>
            <div className="ml-[7px]"><CheckBox label="Enabled Only" checked /></div>
            <button type="button" aria-label="Tags" className="ml-auto"><Tag className="size-[10px]" /></button>
            <button type="button" aria-label="Add-on settings" className="ml-[6px] flex h-[12px] w-[11px] items-center justify-center rounded-[2px] bg-[#282828]">
              <ChevronDown className="size-[9px]" />
            </button>
          </div>
          <AddonPanel />
        </div>
      </div>
      <div className="flex h-[18px] items-start gap-[6px] pl-[5px]">
        <button type="button" aria-label="Menu" className="flex h-[12px] w-[12px] items-center justify-center rounded-[2px] bg-[#282828] text-[#a8a8a8]">
          <Menu className="size-[10px]" />
        </button>
        <button type="button" className="h-[12px] w-[75px] rounded-[2px] bg-[#545454]">Save Preferences *</button>
        <ChevronDown className="mr-[9px] ml-auto size-[7px] rotate-180 self-end text-[#999]" />
      </div>
    </div>
  );
}

/* ---------- Status bar ---------- */

function MouseIcon({ button }: { button: 'left' | 'middle' | 'right' }) {
  const fill = { left: 'M1 1h4v5H1z', middle: 'M3.5 2h2v4h-2z', right: 'M4.5 1H8v5H4.5z' }[button];
  return (
    <svg viewBox="0 0 9 12" fill="none" className="h-[11px] w-[9px]" aria-hidden="true">
      <rect x=".8" y=".8" width="7.4" height="10.4" rx="2" stroke="#8c8c8c" />
      <path d={fill} fill="#c8c8c8" />
    </svg>
  );
}

function StatusBar() {
  return (
    <footer className="flex h-[14px] shrink-0 items-center gap-[7px] bg-[#181818] px-[2px] text-[#8c8c8c]">
      <span className="flex items-center gap-px"><MouseIcon button="left" />Select</span>
      <span className="flex items-center gap-px"><MouseIcon button="middle" />Rotate View</span>
      <span className="flex items-center gap-px"><MouseIcon button="right" />Object</span>
      <span className="ml-auto flex items-center gap-[4px] pr-[3px]">
        <Icon name="globe" className="size-[10px]" />
        <span className="border-l border-[#555] pl-[2px] leading-[9px]">4.3.2</span>
      </span>
    </footer>
  );
}

export default function App() {
  return (
    <div className="relative flex h-screen flex-col overflow-hidden bg-[#181818] font-['Inter',sans-serif] text-[7px] leading-[12px] [font-feature-settings:'cv08']">
      <TopBar />
      <main className="flex min-h-0 flex-1 gap-px">
        <Viewport />
        <aside className="flex w-[219px] shrink-0 flex-col">
          <Outliner />
          <Properties />
        </aside>
      </main>
      <StatusBar />
      <PreferencesWindow />
    </div>
  );
}
